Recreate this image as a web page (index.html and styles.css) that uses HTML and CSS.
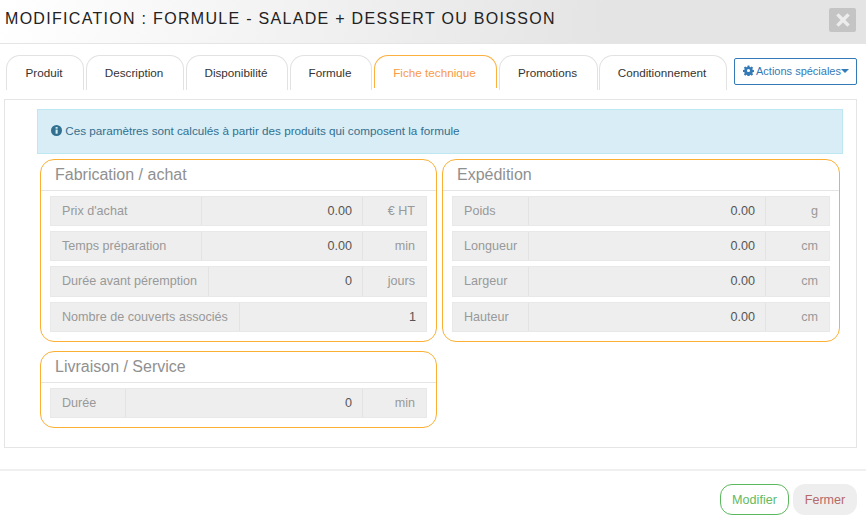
FILE: index.html
```html
<!doctype html>
<html lang="fr">
  <head>
    <meta charset="UTF-8" />
    <title>Modification formule</title>
    <link rel="stylesheet" href="styles.css">
  </head>
  <body>
    <div class="modal-header">
      <h4 class="modal-title">MODIFICATION : FORMULE - SALADE + DESSERT OU BOISSON</h4>
      <button class="close-btn" type="button">
        <svg width="16" height="16" viewBox="0 0 16 16"><path d="M3.6 1.2 8 5.6l4.4-4.4 2.4 2.4L10.400 8l4.400 4.400-2.400 2.400L8 10.400l-4.400 4.400-2.400-2.400L5.600 8 1.200 3.600z" fill="#ececec"/></svg>
      </button>
    </div>

    <div class="tabs-bar">
      <a class="tab tab-produit">Produit</a>
      <a class="tab tab-description">Description</a>
      <a class="tab tab-dispo">Disponibilité</a>
      <a class="tab tab-formule">Formule</a>
      <a class="tab tab-fiche active">Fiche technique</a>
      <a class="tab tab-promo">Promotions</a>
      <a class="tab tab-condi">Conditionnement</a>
      <button class="actions-btn" type="button">
        <svg width="11" height="11" viewBox="0 0 24 24"><path fill="#337ab7" fill-rule="evenodd" d="M10 1h4l.6 3.200 1.900.8 2.700-1.800 2.800 2.800-1.800 2.700.8 1.900 3 .6v4l-3 .6-.8 1.900 1.800 2.700-2.800 2.800-2.700-1.800-1.900.8-.6 3h-4l-.6-3-1.900-.8-2.700 1.800-2.800-2.800 1.800-2.700-.8-1.900-3.200-.6v-4l3.200-.6.8-1.900-1.800-2.700 2.800-2.800 2.700 1.800 1.900-.8zM12 8.500a3.500 3.500 0 1 0 0 7 3.500 3.500 0 0 0 0-7z"/></svg>
        <span>Actions spéciales</span><span class="caret"></span>
      </button>
    </div>

    <div class="tab-panel">
      <div class="alert-info">
        <svg width="11" height="11" viewBox="0 0 24 24"><circle cx="12" cy="12" r="12" fill="#31708f"/><rect x="10" y="10" width="4.500" height="9" fill="#d9edf7"/><rect x="10" y="4.500" width="4.500" height="3.500" fill="#d9edf7"/></svg>
        Ces paramètres sont calculés à partir des produits qui composent la formule
      </div>

      <div class="cards">
        <div class="card">
          <div class="card-title">Fabrication / achat</div>
          <div class="card-body">
            <div class="field"><span class="field-label w-prix">Prix d'achat</span><span class="field-value">0.00</span><span class="field-unit">€ HT</span></div>
            <div class="field"><span class="field-label w-prix">Temps préparation</span><span class="field-value">0.00</span><span class="field-unit">min</span></div>
            <div class="field"><span class="field-label w-duree">Durée avant péremption</span><span class="field-value">0</span><span class="field-unit">jours</span></div>
            <div class="field"><span class="field-label w-nombre">Nombre de couverts associés</span><span class="field-value">1</span></div>
          </div>
        </div>

        <div class="card">
          <div class="card-title">Expédition</div>
          <div class="card-body">
            <div class="field"><span class="field-label w-short">Poids</span><span class="field-value">0.00</span><span class="field-unit">g</span></div>
            <div class="field"><span class="field-label w-short">Longueur</span><span class="field-value">0.00</span><span class="field-unit">cm</span></div>
            <div class="field"><span class="field-label w-short">Largeur</span><span class="field-value">0.00</span><span class="field-unit">cm</span></div>
            <div class="field"><span class="field-label w-short">Hauteur</span><span class="field-value">0.00</span><span class="field-unit">cm</span></div>
          </div>
        </div>

        <div class="card">
          <div class="card-title">Livraison / Service</div>
          <div class="card-body">
            <div class="field"><span class="field-label w-livraison">Durée</span><span class="field-value">0</span><span class="field-unit">min</span></div>
          </div>
        </div>
      </div>
    </div>

    <div class="modal-footer">
      <button class="btn-modifier" type="button">Modifier</button>
      <button class="btn-fermer" type="button">Fermer</button>
    </div>
  </body>
</html>
```

FILE: styles.css
```css
body {
  margin: 0;
  font-family: "Liberation Sans", Arial, sans-serif;
  font-size: 11.7px;
  color: #333;
  background: white;
}

.modal-header {
  display: flex;
  justify-content: space-between;
  align-items: flex-start;
  box-sizing: border-box;
  height: 44px;
  padding: 8px 10px 0 5px;
  background: linear-gradient(100deg, #fff 0%, #e4e4e4 70%, #e4e4e4 100%);
  border-bottom: 1px solid #e5e5e5;
}

.modal-title {
  margin: 2px 0 0;
  font-size: 16px;
  font-weight: 400;
  line-height: 18px;
  letter-spacing: 1.3px;
  color: #222;
}

.close-btn {
  display: flex;
  align-items: center;
  justify-content: center;
  width: 27px;
  height: 24px;
  padding: 0;
  border: none;
  border-radius: 2px;
  background: #c4c4c4;
}

.tabs-bar {
  display: flex;
  align-items: flex-start;
  gap: 2px;
  height: 46px;
  padding: 11px 0 0 6px;
  box-sizing: border-box;
}

.tab {
  display: block;
  box-sizing: border-box;
  height: 35px;
  padding: 10px 2px 0 0;
  text-align: center;
  color: #333;
  border: 1px solid #e2e2e2;
  border-bottom: none;
  border-radius: 14px 14px 0 0;
}

.tab-produit { width: 78px; }
.tab-description { width: 98px; }
.tab-dispo { width: 102px; }
.tab-formule { width: 82px; }
.tab-fiche { width: 123px; }
.tab-promo { width: 99px; }
.tab-condi { width: 128px; margin-left: -1px; }

.tab.active {
  height: 33px;
  color: #fa9a45;
  border-color: #fbb040;
}

.actions-btn {
  display: flex;
  align-items: center;
  justify-content: center;
  gap: 2px;
  box-sizing: border-box;
  width: 123px;
  height: 27px;
  margin: 3px 0 0 5px;
  padding: 0 0 2px 1px;
  border: 1px solid #337ab7;
  border-radius: 2px;
  background: white;
  color: #337ab7;
  font: 11px "Liberation Sans", Arial, sans-serif;
}

.caret {
  width: 0;
  height: 0;
  margin-left: -2px;
  border-left: 4px solid transparent;
  border-right: 4px solid transparent;
  border-top: 4px solid #337ab7;
}

.tab-panel {
  box-sizing: border-box;
  width: 853px;
  height: 349px;
  margin: 9px 0 0 4px;
  padding: 9px 13px 0 32px;
  border: 1px solid #e5e5e5;
}

.alert-info {
  box-sizing: border-box;
  height: 45px;
  padding-top: 14px;
  padding-left: 13px;
  background: #d9edf7;
  border: 1px solid #bce8f1;
  color: #31708f;
}

.alert-info svg {
  vertical-align: -1px;
}

.cards {
  display: grid;
  grid-template-columns: 397px 398px;
  column-gap: 5px;
  row-gap: 9px;
  align-items: start;
  margin: 5px 0 0 3px;
}

.card {
  box-sizing: border-box;
  border: 1px solid #fbb034;
  border-radius: 14px;
}

.card-title {
  box-sizing: border-box;
  height: 31px;
  padding: 6px 0 0 14px;
  font-size: 16px;
  line-height: 18px;
  color: #909090;
  border-bottom: 1px solid #e5e5e5;
}

.card-body {
  display: flex;
  flex-direction: column;
  gap: 5px;
  padding: 5px 9px 9px 9px;
}

.field {
  display: flex;
  box-sizing: border-box;
  height: 30.2px;
  font-size: 12.6px;
  line-height: 29px;
  background: #eee;
  border: 1px solid #e8e8e8;
}

.field-label {
  box-sizing: border-box;
  padding-left: 11px;
  color: #999;
  border-right: 1px solid #e3e3e3;
}

.w-prix { width: 151px; }
.w-duree { width: 158px; }
.w-nombre { width: 189px; }
.w-short { width: 76px; }
.w-livraison { width: 75px; }

.field-value {
  flex: 1;
  padding-right: 10px;
  text-align: right;
  color: #555;
}

.field-unit {
  box-sizing: border-box;
  width: 64px;
  padding-right: 11px;
  text-align: right;
  color: #999;
  border-left: 1px solid #e3e3e3;
}

.modal-footer {
  display: flex;
  justify-content: flex-end;
  gap: 4px;
  box-sizing: border-box;
  height: 50px;
  margin-top: 21px;
  padding: 13px 9px 0 0;
  border-top: 2px solid #f0f0f0;
}

.btn-modifier,
.btn-fermer {
  height: 31px;
  padding: 0;
  border-radius: 12px;
  font: 12.6px "Liberation Sans", Arial, sans-serif;
}

.btn-modifier {
  width: 69px;
  border: 1px solid #5cb85c;
  background: white;
  color: #62bb62;
}

.btn-fermer {
  width: 64px;
  border: none;
  background: #eee;
  color: #b56a6a;
}
```
